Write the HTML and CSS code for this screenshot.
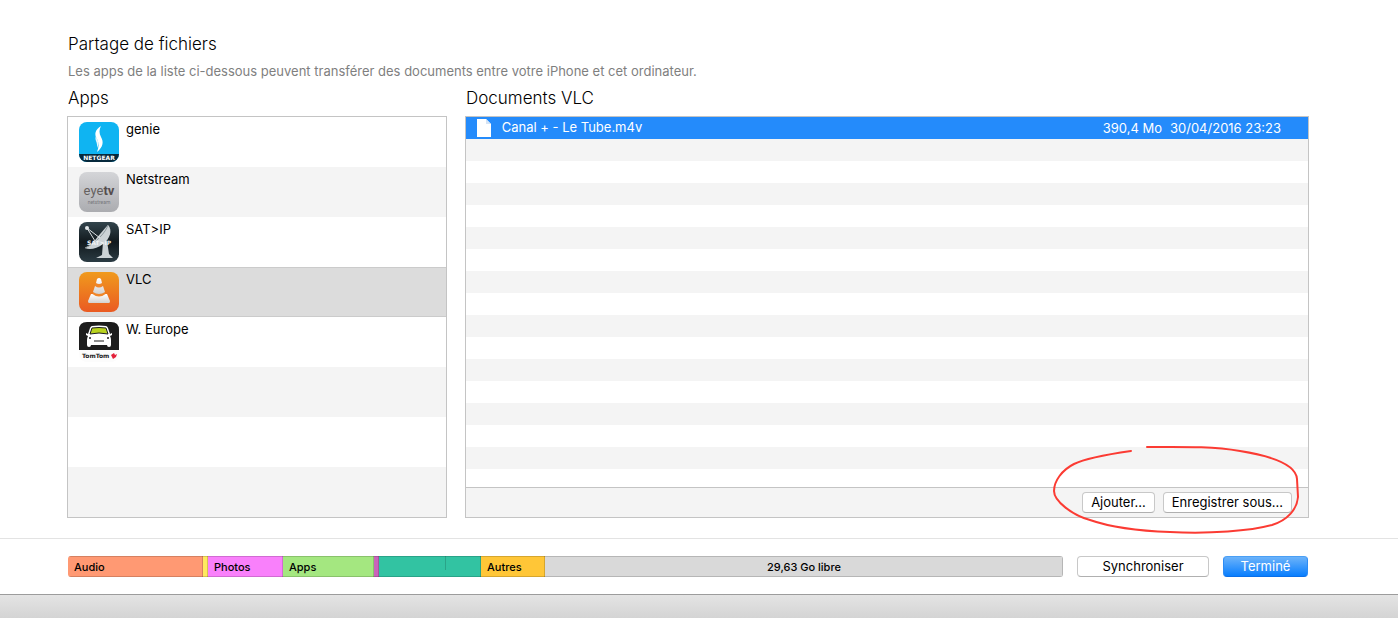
FILE: index.html
```html
<!DOCTYPE html>
<html lang="fr">
<head>
    <meta charset="UTF-8">
    <meta name="viewport" content="width=device-width, initial-scale=1.0">
    <title>Partage de fichiers</title>
    <link rel="stylesheet" href="styles.css">
</head>
<body>

    <!-- File sharing section -->
    <main class="sharing">
        <h1>Partage de fichiers</h1>
        <p class="intro">Les apps de la liste ci-dessous peuvent transférer des documents entre votre iPhone et cet ordinateur.</p>

        <div class="columns">
            <section class="apps">
                <h2>Apps</h2>
                <ul class="app-list">
                    <li>
                        <svg class="app-icon" viewBox="0 0 40 40">
                            <defs><clipPath id="tile"><rect width="40" height="40" rx="8"/></clipPath></defs>
                            <g clip-path="url(#tile)">
                                <rect width="40" height="40" fill="#0fb4f2"/>
                                <rect y="32" width="40" height="8" fill="#06293c"/>
                            </g>
                            <path d="M22 4 C16 8 15 12 18 17 C20 21 20 25 18 30 C24 25 25 20 22 15 C20 11 20 8 22 4Z" fill="#fff"/>
                            <path d="M17 14 C15 18 19 20 18 26 C21 20 18 18 17 14Z" fill="#e4f6fd"/>
                            <text class="wide" x="20" y="38" font-size="6" font-weight="700" fill="#fff" text-anchor="middle">NETGEAR</text>
                        </svg>
                        <span>genie</span>
                    </li>
                    <li>
                        <svg class="app-icon" viewBox="0 0 40 40">
                            <defs><linearGradient id="silver" x2="0" y2="1"><stop stop-color="#d4d5d8"/><stop offset="1" stop-color="#abacb0"/></linearGradient></defs>
                            <rect width="40" height="40" rx="8" fill="url(#silver)"/>
                            <text class="narrow" x="20" y="23" font-size="13" fill="#65605f" text-anchor="middle">eye<tspan font-weight="700" fill="#554d4d">tv</tspan></text>
                            <text class="narrow" x="20" y="32" font-size="5" fill="#77787c" text-anchor="middle">netstream</text>
                        </svg>
                        <span>Netstream</span>
                    </li>
                    <li>
                        <svg class="app-icon" viewBox="0 0 40 40">
                            <defs><linearGradient id="night" x2="0" y2="1"><stop stop-color="#33454d"/><stop offset=".5" stop-color="#11191d"/><stop offset="1" stop-color="#2b3b43"/></linearGradient></defs>
                            <rect width="40" height="40" rx="8" fill="url(#night)"/>
                            <path d="M29 3 C34 8 31 17 24 22 C18 27 10 28 6 26 C11 24 14 21 17 17 C21 12 25 7 29 3Z" fill="#cbd2d5"/>
                            <path d="M29 3 C27 10 17 21 6 26" stroke="#8e9a9f" fill="none"/>
                            <path d="M8 6 L21 16 M8 6 L16 19" stroke="#dce1e3" fill="none"/>
                            <circle cx="8" cy="6" r="2" fill="#e3e8ea"/>
                            <path d="M24 20 L28 19 L30 32 L34 36 H17 L23 33Z" fill="#cbd2d5"/>
                            <text class="wide" x="20" y="23" font-size="6" font-weight="700" fill="#f2f5f6" text-anchor="middle">SAT&gt;IP</text>
                        </svg>
                        <span>SAT&gt;IP</span>
                    </li>
                    <li class="selected">
                        <svg class="app-icon" viewBox="0 0 40 40">
                            <defs>
                                <linearGradient id="orange" x2="0" y2="1"><stop stop-color="#f09a1d"/><stop offset="1" stop-color="#ea5a22"/></linearGradient>
                                <linearGradient id="cone" x2="0" y2="1"><stop stop-color="#fff"/><stop offset="1" stop-color="#d3d1d0"/></linearGradient>
                            </defs>
                            <rect width="40" height="40" rx="8" fill="url(#orange)"/>
                            <path d="M12 22 H28 L31 29 Q31 31 30 31 H10 Q9 31 9 29Z" fill="url(#cone)"/>
                            <path d="M18 7 Q20 5 22 7 L26.500 22 Q20 27 13.500 22Z" fill="#f0872a"/>
                            <path d="M18 7 Q20 5 22 7 L23 11 Q20 13 17 11Z M16 14 Q20 17 24 14 L26 20 Q20 24 14 20Z" fill="url(#cone)"/>
                        </svg>
                        <span>VLC</span>
                    </li>
                    <li>
                        <svg class="app-icon" viewBox="0 0 40 40">
                            <rect width="40" height="40" rx="8" fill="#fcfcfc"/>
                            <path d="M0 28 V8 Q0 0 8 0 H32 Q40 0 40 8 V28Z" fill="#1c1c1c"/>
                            <path d="M13 4 Q20 3 27 4 Q28 4 29 6 L31 12 L33 11 L33 13 L31 14 Q32 16 32 18 V23 Q32 25 30 25 Q28 25 28 23 H12 Q12 25 10 25 Q8 25 8 23 V18 Q8 16 9 14 L7 13 L7 11 L9 12 L11 6 Q12 4 13 4Z" fill="#fff"/>
                            <path d="M13 6 Q20 5 27 6 L29 12 Q20 10 11 12Z" fill="#b9d31f" stroke="#1c1c1c"/>
                            <circle cx="11" cy="16" r="1" fill="#1c1c1c"/>
                            <circle cx="29" cy="16" r="1" fill="#1c1c1c"/>
                            <path d="M15 19 H25" stroke="#1c1c1c"/>
                            <text class="wide" x="3" y="36" font-size="6" font-weight="700" fill="#222">TomTom</text>
                            <path d="M32 33 L35 31 L36 33 L38 32 L37 35 L34 37Z" fill="#e3203a"/>
                        </svg>
                        <span>W. Europe</span>
                    </li>
                </ul>
            </section>

            <section class="documents">
                <h2>Documents VLC</h2>
                <div class="document-panel">
                    <div class="document-rows">
                        <table>
                            <tr>
                                <td class="name">
                                    <svg class="file-icon" viewBox="0 0 14 18"><path d="M0 0 H9 L14 5 V18 H0Z" fill="#fff"/><path d="M9 0 V5 H14Z" fill="#d5e4f5"/></svg>
                                    Canal + - Le Tube.m4v
                                </td>
                                <td class="size">390,4 Mo</td>
                                <td class="date">30/04/2016 23:23</td>
                            </tr>
                        </table>
                    </div>
                    <div class="document-actions">
                        <button type="button">Ajouter...</button>
                        <button type="button">Enregistrer sous...</button>
                    </div>
                    <!-- Hand-drawn circle over the two buttons -->
                    <svg class="marker" viewBox="0 0 252 92">
                        <path d="M81 8 C60 11 36 15 24 21 C12 27 4 38 4 48 C4 58 22 72 40 77 C60 84 90 88 120 89 C160 91 200 88 222 82 C238 77 247 66 248 54 L247 36 C246 20 215 12 190 8 C160 3 130 4 97 4"/>
                    </svg>
                </div>
            </section>
        </div>
    </main>

    <!-- Capacity bar and sync buttons -->
    <footer class="sync">
        <div class="capacity">
            <div class="audio" style="flex-grow: 135">Audio</div>
            <div class="video" style="flex-grow: 5"></div>
            <div class="photos" style="flex-grow: 75">Photos</div>
            <div class="apps-used" style="flex-grow: 91">Apps</div>
            <div class="books" style="flex-grow: 5"></div>
            <div class="data" style="flex-grow: 102"></div>
            <div class="other" style="flex-grow: 64">Autres</div>
            <div class="free" style="flex-grow: 518">29,63 Go libre</div>
        </div>
        <button type="button" class="sync-button">Synchroniser</button>
        <button type="button" class="done-button">Terminé</button>
    </footer>
    <div class="status-bar"></div>

</body>
</html>
```

FILE: styles.css
```css
* {
    box-sizing: border-box;
}
body {
    margin: 0;
    min-height: 100vh;
    display: flex;
    flex-direction: column;
    background-color: white;
    color: black;
    font-family: Inter, "Liberation Sans", sans-serif;
    font-size: 13px;
    line-height: 16px;
}
h1, h2 {
    margin: 0;
    padding-left: 1px;
    font-size: 17px;
    font-weight: 300;
    line-height: 24px;
}
button {
    height: 21px;
    padding: 0 8px;
    background-color: white;
    border: 1px solid #c8c8c8;
    border-bottom-color: #b0b0b0;
    border-radius: 4px;
    color: black;
    font: inherit;
    line-height: 19px;
}

/* File sharing */
.sharing {
    padding: 32px 89px 20px 67px;
    border-bottom: 1px solid #e3e3e3;
}
.intro {
    margin: 7px 0;
    padding-left: 1px;
    color: #7f7f7f;
}
.columns {
    display: flex;
    gap: 18px;
}
.apps {
    flex: 380 1 0;
}
.documents {
    flex: 844 1 0;
}
.apps h2, .documents h2 {
    margin-bottom: 6px;
}
.app-list {
    height: 402px;
    margin: 0;
    padding: 0;
    list-style: none;
    border: 1px solid #c4c4c4;
    background: repeating-linear-gradient(white 0 50px, #f4f4f4 50px 100px);
}
.app-list li {
    display: flex;
    gap: 7px;
    height: 50px;
    padding: 5px 11px;
}
.app-list span {
    line-height: 14px;
}
.app-list .selected {
    background-color: #dcdcdc;
    box-shadow: inset 0 1px #cbcbcb, inset 0 -1px #cbcbcb;
}
.app-icon {
    width: 40px;
    height: 40px;
}
.app-icon .narrow {
    font-family: Roboto, sans-serif;
}
.app-icon .wide {
    font-family: "DejaVu Sans", sans-serif;
}
.document-panel {
    position: relative;
    height: 402px;
    display: flex;
    flex-direction: column;
    border: 1px solid #c4c4c4;
}
.document-rows {
    flex: 1;
    background: repeating-linear-gradient(white 0 22px, #f4f4f4 22px 44px);
}
table {
    width: 100%;
    border-collapse: collapse;
    background-color: #248bfb;
    color: white;
}
td {
    height: 22px;
    padding: 0;
    white-space: nowrap;
}
.name {
    width: 100%;
    padding-left: 11px;
}
.size {
    padding-right: 8px;
}
.date {
    padding-right: 27px;
}
.file-icon {
    width: 14px;
    height: 18px;
    margin-right: 7px;
    vertical-align: middle;
}
.document-actions {
    display: flex;
    justify-content: flex-end;
    gap: 8px;
    height: 30px;
    padding: 4px 16px;
    border-top: 1px solid #c4c4c4;
    background-color: #f4f4f4;
}
.marker {
    position: absolute;
    right: 6px;
    bottom: -18px;
    width: 252px;
    height: 92px;
    fill: none;
    stroke: #fb3b33;
    stroke-width: 2;
    stroke-linecap: round;
    pointer-events: none;
}

/* Capacity bar */
.sync {
    display: flex;
    gap: 14px;
    padding: 17px 90px 17px 68px;
}
.capacity {
    flex: 1;
    display: flex;
    height: 21px;
    border-radius: 3px;
    overflow: hidden;
    font-size: 11px;
    font-weight: 500;
    line-height: 22px;
}
.capacity div {
    flex: 1 1 0;
    min-width: 0;
    text-indent: 6px;
    box-shadow: inset 0 1px rgba(0, 0, 0, 0.16), inset 0 -1px rgba(0, 0, 0, 0.16), inset -1px 0 rgba(0, 0, 0, 0.16);
}
.capacity .audio {
    background-color: #ff9973;
}
.capacity .video {
    background-color: #ffe95f;
}
.capacity .photos {
    background-color: #f980fb;
}
.capacity .apps-used {
    background-color: #a4e780;
}
.capacity .books {
    background-color: #c964bb;
}
.capacity .data {
    background: linear-gradient(#2aa488, #2aa488) 65% 0 / 1px 14px no-repeat #32c3a2;
}
.capacity .other {
    background-color: #ffc637;
}
.capacity .free {
    background-color: #d9d9d9;
    text-align: center;
    text-indent: 0;
}
.sync-button {
    width: 132px;
}
.done-button {
    width: 85px;
    background: linear-gradient(#6cb3fa, #087efe);
    border-color: #4a9ff5 #2d8cf5 #0a6fe8;
    color: white;
}
.status-bar {
    flex: 1;
    min-height: 24px;
    border-top: 1px solid #9c9c9c;
    background: linear-gradient(#e4e4e4, #d4d4d4);
}
```
